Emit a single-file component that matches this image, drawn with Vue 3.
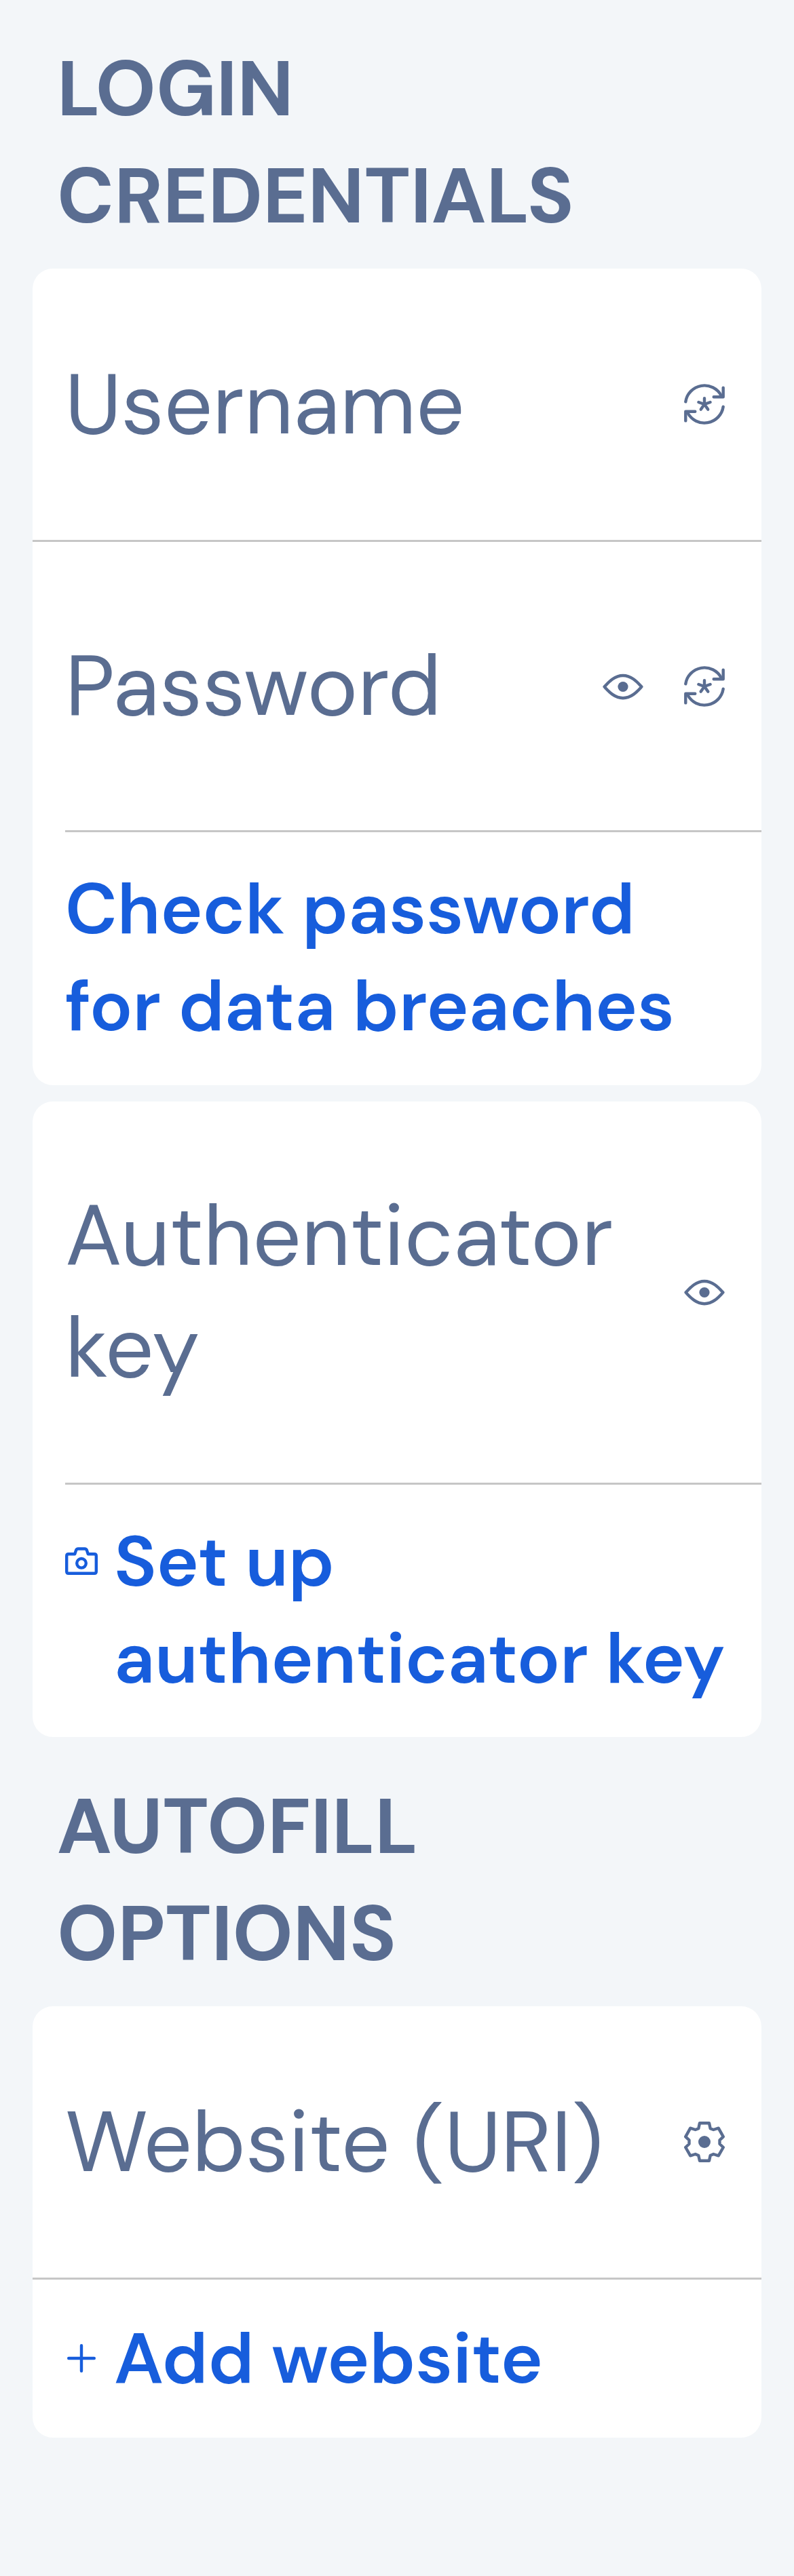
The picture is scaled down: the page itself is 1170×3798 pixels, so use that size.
<script setup>
const icons = {
  generate: {
    lines: [
      'M2.3 26.4A28 28 0 0 1 54.8 17.4',
      'M57.7 5.6V19.2H43.7',
      'M57.7 33.6A28 28 0 0 1 5.2 42.6',
      'M2.3 54.4V40.8H16.3',
      'M30 30V21.2M30 30L38.6 27M30 30L21.4 27M30 30L35.2 37.6M30 30L24.8 37.6',
    ],
  },
  eye: {
    lines: ['M2.6 30.6C7.5 25.5 16.5 14 30 14S52.5 25.5 57.4 30.6C52.5 35.7 43.5 47.2 30 47.2S7.5 35.7 2.6 30.6Z'],
    dot: [30, 30.5, 7.6],
  },
  gear: {
    lines: [
      'M23 2.2L21.3 10.3L16.7 12L9.3 9.7L2.2 22.3L7.5 27.3V33L2.2 38L9.3 50.3L16.7 48L21.3 50L23 57.8H37L38.7 50L43.3 48L50.7 50.3L57.8 38L52.5 33V27.3L57.8 22.3L50.7 9.7L43.3 12L38.7 10.3L37 2.2Z',
    ],
    dot: [30, 30, 9],
  },
}

const sections = [
  {
    title: ['LOGIN', 'CREDENTIALS'],
    cards: [
      [
        { kind: 'field', name: 'username', icons: ['generate'], lines: ['Username'] },
        { kind: 'field', name: 'password', inset: true, icons: ['eye', 'generate'], lines: ['Password'] },
        { kind: 'action', name: 'check', lines: ['Check password', 'for data breaches'] },
      ],
      [
        { kind: 'field', name: 'authenticator', inset: true, icons: ['eye'], lines: ['Authenticator', 'key'] },
        { kind: 'action', name: 'setup', icon: 'camera', lines: ['Set up', 'authenticator key'] },
      ],
    ],
  },
  {
    title: ['AUTOFILL', 'OPTIONS'],
    cards: [
      [
        { kind: 'field', name: 'website', icons: ['gear'], lines: ['Website (URI)'] },
        { kind: 'action', name: 'add', icon: 'plus', lines: ['Add website'] },
      ],
    ],
  },
]
</script>

<template>
  <main class="page">
    <section v-for="(section, s) in sections" :key="s" class="section">
      <h2 class="title">
        <span v-for="line in section.title" :key="line" class="line">{{ line }}</span>
      </h2>
      <div class="cards">
        <div v-for="(card, c) in section.cards" :key="c" class="card">
          <template v-for="row in card" :key="row.name">
            <div v-if="row.kind === 'field'" class="field" :class="row.name">
              <label class="label">
                <span v-for="line in row.lines" :key="line" class="line">{{ line }}</span>
              </label>
              <div class="buttons">
                <svg v-for="name in row.icons" :key="name" class="icon" viewBox="0 0 60 60">
                  <path v-for="d in icons[name].lines" :key="d" :d="d" />
                  <circle
                    v-if="icons[name].dot"
                    class="dot"
                    :cx="icons[name].dot[0]"
                    :cy="icons[name].dot[1]"
                    :r="icons[name].dot[2]"
                  />
                </svg>
              </div>
            </div>
            <div v-if="row.kind === 'field'" class="divider" :class="{ inset: row.inset }"></div>
            <div v-if="row.kind === 'action'" class="action" :class="row.name">
              <svg v-if="row.icon === 'camera'" class="glyph" viewBox="0 0 48 48">
                <path d="M5 13.2H14.3L16 7.8Q16.9 5.5 19.2 5.5H28.8Q31.1 5.5 32 7.8L33.7 13.2H43Q45.8 13.2 45.8 16V39Q45.8 41.8 43 41.8H5Q2.2 41.8 2.2 39V16Q2.2 13.2 5 13.2Z" />
                <circle cx="24" cy="26.8" r="6.8" />
              </svg>
              <svg v-if="row.icon === 'plus'" class="glyph" viewBox="0 0 48 48">
                <path d="M24 5.2V42.8M5.2 24H42.8" />
              </svg>
              <span class="action-text">
                <span v-for="line in row.lines" :key="line" class="line">{{ line }}</span>
              </span>
            </div>
          </template>
        </div>
      </div>
    </section>
  </main>
</template>

<style>
body {
  margin: 0;
  background: #f3f6f9;
}
</style>

<style scoped>
.page {
  box-sizing: border-box;
  width: 1170px;
  height: 3798px;
  padding: 52px 48px 0;
  overflow: hidden;
  background: #f3f6f9;
  color: #5a6d91;
  font-family: "DM Sans", Inter, "Liberation Sans", sans-serif;
}
.section + .section {
  padding-top: 53px;
}
.title {
  margin: 0 0 28px;
  padding-left: 36px;
  font-size: 114px;
  font-weight: 700;
  line-height: 158px;
}
.line {
  display: block;
  white-space: nowrap;
}
.cards {
  display: flex;
  flex-direction: column;
  gap: 24px;
}
.card {
  overflow: hidden;
  border-radius: 30px;
  background: #fff;
}
.field {
  box-sizing: border-box;
  display: flex;
  align-items: center;
  justify-content: space-between;
  height: 400px;
  padding: 0 54px 0 48px;
}
.password {
  height: 425px;
}
.authenticator {
  height: 562px;
}
.label {
  font-size: 126px;
  line-height: 165px;
}
.buttons {
  display: flex;
  gap: 60px;
}
.icon {
  display: block;
  width: 60px;
  height: 60px;
}
.icon path,
.glyph {
  fill: none;
  stroke: currentColor;
  stroke-width: 4.4;
  stroke-linecap: round;
  stroke-linejoin: round;
}
.dot {
  fill: currentColor;
}
.divider {
  height: 3px;
  background: #c6c6c6;
}
.inset {
  margin-left: 48px;
}
.action {
  box-sizing: border-box;
  display: flex;
  height: 373px;
  padding: 42px 48px 0;
  color: #175ddc;
  font-size: 105px;
  font-weight: 600;
  line-height: 143px;
}
.setup {
  height: 372px;
}
.add {
  height: 233px;
  padding-top: 45px;
}
.glyph {
  flex: none;
  width: 48px;
  height: 48px;
  margin: 47px 24px 0 0;
}
</style>
